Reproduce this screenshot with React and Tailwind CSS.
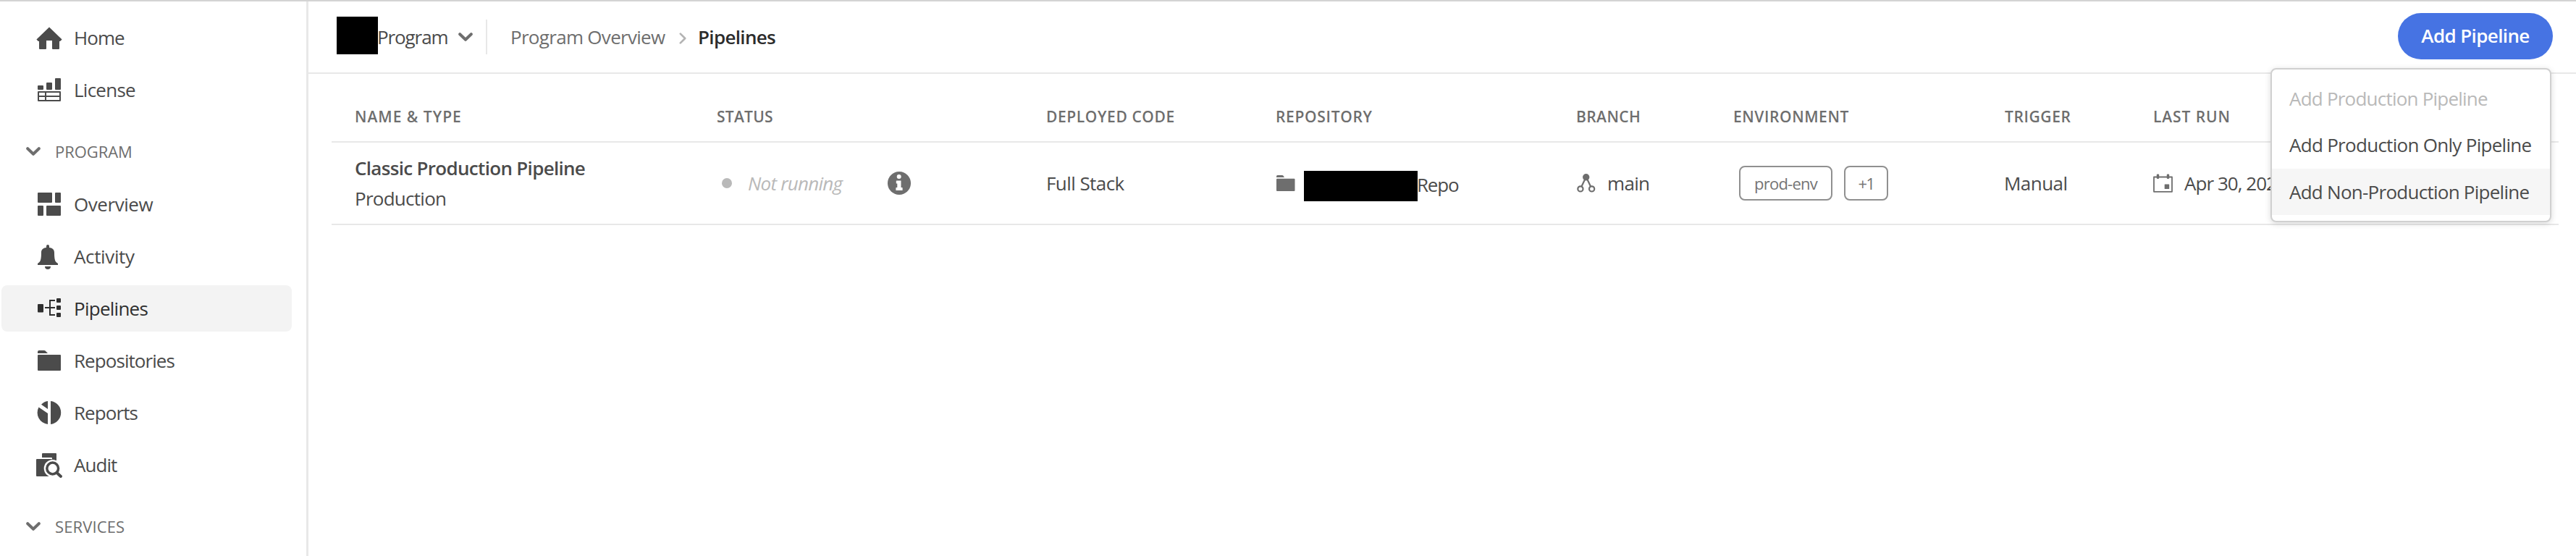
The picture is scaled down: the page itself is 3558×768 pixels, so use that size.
const icons = {
  home: (
    <path d="M18 3.4 35.6 20.6l-2 2q-.6.5-1.6.5V33q0 1-1 1h-8q-1 0-1-1V22h-8v11q0 1-1 1H5q-1 0-1-1v-9.9q-1 0-1.6-.5l-2-2Z" />
  ),
  license: (
    <>
      <rect x="2" y="12" width="8" height="6" rx="1" />
      <rect x="14" y="8" width="8" height="10" rx="1" />
      <rect x="26" y="2" width="8" height="16" rx="1" />
      <path d="M3 21h30v12H3zM3 27h30M13 21v12" fill="none" stroke="currentColor" strokeWidth="2" strokeLinejoin="round" />
    </>
  ),
  overview: (
    <>
      <rect x="2" y="2" width="20" height="14" rx="1" />
      <rect x="26" y="2" width="8" height="14" rx="1" />
      <rect x="2" y="20" width="8" height="14" rx="1" />
      <rect x="14" y="20" width="20" height="14" rx="1" />
    </>
  ),
  activity: (
    <path d="M14 6V4a2 2 0 0 1 4 0v2c5 .5 7 3 7 7 0 9 1 13 4.5 14.500q.5.5.5 1.200V30H2v-1.300q0-.7.5-1.200C6 26 7 22 7 13c0-4 2-6.500 7-7ZM12 32h8a4 4 0 0 1-8 0Z" />
  ),
  pipelines: (
    <>
      <rect x="2" y="12" width="8" height="11.500" rx="1" />
      <rect x="28" y="4" width="6" height="6" rx="1" />
      <rect x="28" y="14" width="6" height="6" rx="1" />
      <rect x="28" y="24" width="6" height="6" rx="1" />
      <path d="M12 17h14M26 7h-7v20h7" fill="none" stroke="currentColor" strokeWidth="2" />
    </>
  ),
  repositories: (
    <>
      <path d="M2 8V6q0-2 2-2h7q1 0 1.800.700L16 8Z" />
      <rect x="2" y="10" width="32" height="22" rx="1" />
    </>
  ),
  reports: (
    <path d="M20 2.100a16 16 0 0 1 0 31.800ZM16 19v14.900A16 16 0 0 1 3.500 10.400ZM16 13V2.100A16 16 0 0 0 7 6.800Z" />
  ),
  audit: (
    <>
      <path d="M8 8V3q0-1 1-1h18q1 0 1 1v9h-6V9q0-1-1-1Z" />
      <rect x="0" y="10" width="22" height="24" rx="1" />
      <circle cx="22.700" cy="23" r="12" fill="white" />
      <path d="m29 29.500 5 4.800" stroke="white" strokeWidth="6" strokeLinecap="round" />
      <circle cx="22.700" cy="23" r="7.900" fill="none" stroke="currentColor" strokeWidth="3.500" />
      <path d="m28.500 29 5.400 5" stroke="currentColor" strokeWidth="4" strokeLinecap="round" />
    </>
  ),
};

function NavItem({ icon, label, tracking, active }) {
  return (
    <div
      className={`mb-2 ml-0.5 mr-5 flex h-16 shrink-0 items-center rounded-lg pl-12 ${
        active ? "bg-[#f3f3f3] text-[#2f2f2f]" : "text-[#4b4b4b]"
      }`}
    >
      <svg className="size-9" viewBox="0 0 36 36" fill="currentColor">
        {icons[icon]}
      </svg>
      <span className={`ml-4 text-[26px] leading-none ${tracking}`}>{label}</span>
    </div>
  );
}

function Chevron() {
  return (
    <svg className="h-3 w-5" viewBox="0 0 20 12" fill="none" stroke="#6e6e6e" strokeWidth="4" strokeLinecap="round" strokeLinejoin="round">
      <path d="m2.200 2.200 7.800 7.600 7.800-7.600" />
    </svg>
  );
}

function NavSection({ label, tracking }) {
  return (
    <div className="mt-6 mb-[21px] flex h-[41px] shrink-0 items-center pl-9">
      <Chevron />
      <span className={`ml-5 text-[22px] leading-none text-[#6e6e6e] ${tracking}`}>{label}</span>
    </div>
  );
}

const columns =
  "grid grid-cols-[500px_455px_317px_415px_217px_375px_205px_1fr] border-b-2 border-[#e8e8e8] pl-8 items-center whitespace-nowrap";

const headings = [
  ["NAME & TYPE", "tracking-[1px]"],
  ["STATUS", "tracking-[0.25px]"],
  ["DEPLOYED CODE", "tracking-[0.61px]"],
  ["REPOSITORY", "tracking-[0.69px]"],
  ["BRANCH", "tracking-[0.42px]"],
  ["ENVIRONMENT", "tracking-[0.59px]"],
  ["TRIGGER", "tracking-[0.6px]"],
  ["LAST RUN", "tracking-[0.9px]"],
];

function Tag({ children, className }) {
  return (
    <span className={`flex h-12 items-center justify-center rounded-lg border-2 border-[#909090] text-[22px] text-[#747474] ${className}`}>
      {children}
    </span>
  );
}

export default function App() {
  return (
    <div className="flex h-[768px] w-full overflow-hidden border-t-2 border-[#d3d3d3] bg-white font-['Open_Sans','Noto_Sans',sans-serif] text-[26px] leading-none text-[#4b4b4b]">
      <nav className="flex w-[426px] shrink-0 flex-col border-r-[3px] border-[#e8e8e8] pt-[18px]">
        <NavItem icon="home" label="Home" tracking="tracking-[-0.96px]" />
        <NavItem icon="license" label="License" tracking="tracking-[-0.75px]" />
        <NavSection label="PROGRAM" tracking="tracking-[-0.07px]" />
        <NavItem icon="overview" label="Overview" tracking="tracking-[-0.44px]" />
        <NavItem icon="activity" label="Activity" tracking="tracking-[-0.36px]" />
        <NavItem icon="pipelines" label="Pipelines" tracking="tracking-[-0.74px]" active />
        <NavItem icon="repositories" label="Repositories" tracking="tracking-[-0.94px]" />
        <NavItem icon="reports" label="Reports" tracking="tracking-[-0.93px]" />
        <NavItem icon="audit" label="Audit" tracking="tracking-[-0.96px]" />
        <NavSection label="SERVICES" tracking="tracking-[0.11px]" />
      </nav>

      <main className="relative flex min-w-0 grow flex-col">
        <header className="flex h-[100px] shrink-0 items-center border-b-2 border-[#e8e8e8] pr-8 pl-[39px] whitespace-nowrap">
          <div className="mb-1 h-[52px] w-[57px] bg-black" />
          <span className="-ml-px w-28 tracking-[-1.1px]">Program</span>
          <Chevron />
          <div className="ml-[18px] h-12 w-0.5 bg-[#e8e8e8]" />
          <span className="ml-8 w-[233px] tracking-[-0.7px] text-[#6e6e6e]">Program Overview</span>
          <svg className="mt-1 h-4 w-2.5" viewBox="0 0 10 16" fill="none" stroke="#b3b3b3" strokeWidth="2.600" strokeLinecap="round" strokeLinejoin="round">
            <path d="m1.800 1.600 6.400 6.400-6.400 6.400" />
          </svg>
          <span className="ml-4 font-semibold tracking-[-0.67px] text-[#2c2c2c]">Pipelines</span>
          <button className="mb-0.5 ml-auto h-16 w-[214px] rounded-full bg-[#4673e3] pb-0.5 font-semibold tracking-[-0.61px] text-white">
            Add Pipeline
          </button>
        </header>

        <section className="ml-8 mr-6 flex flex-col pt-[22px]">
          <div className={`h-[73px] pt-[3px] text-[21px] font-semibold text-[#6e6e6e] ${columns}`}>
            {headings.map(([label, tracking]) => (
              <span key={label} className={tracking}>
                {label}
              </span>
            ))}
          </div>
          <div className={`h-[114px] ${columns}`}>
            <div className="leading-[42px]">
              <div className="font-semibold tracking-[-0.69px]">Classic Production Pipeline</div>
              <div className="tracking-[-0.74px]">Production</div>
            </div>
            <div className="flex items-center pl-[7px]">
              <span className="size-3.5 rounded-full bg-[#b9b9b9]" />
              <span className="ml-[22px] w-[193px] tracking-[-0.75px] text-[#b9b9b9] italic">Not running</span>
              <svg className="size-8" viewBox="0 0 32 32">
                <circle cx="16" cy="16" r="16" fill="#6e6e6e" />
                <circle cx="15.700" cy="7" r="3" fill="white" />
                <path d="M13 12.500h5.500v9.500H20q.600 0 .600.600v2.800q0 .600-.600.600h-8q-.600 0-.600-.600v-2.800q0-.600.600-.600h1.300v-5.500H12.400q-.600 0-.600-.600v-2.800q0-.600.600-.600Z" fill="white" />
              </svg>
            </div>
            <span className="tracking-[-0.57px]">Full Stack</span>
            <div className="flex items-center pl-px">
              <svg className="h-[22px] w-[26px]" viewBox="0 0 26 22" fill="#6e6e6e">
                <path d="M0 3V1.500Q0 0 1.500 0H8q.800 0 1.300.500L11 3Z" />
                <rect y="4.800" width="25.500" height="17.200" rx="1" />
              </svg>
              <div className="mt-2 ml-3 h-[42px] w-[157px] bg-black" />
              <span className="mt-[3px] -ml-px tracking-[-1.18px]">Repo</span>
            </div>
            <div className="flex items-center pl-px">
              <svg className="h-[26px] w-[26px]" viewBox="0 0 26 26" fill="none" stroke="#6e6e6e" strokeWidth="2.200">
                <circle cx="12.700" cy="4.800" r="4.700" fill="#6e6e6e" stroke="none" />
                <path d="m11.500 7-5 10.500M14 7l5 10.500" />
                <circle cx="4.900" cy="20.900" r="3.600" />
                <circle cx="20.600" cy="20.900" r="3.600" />
              </svg>
              <span className="ml-4 tracking-[-0.69px]">main</span>
            </div>
            <div className="flex gap-4 pl-2">
              <Tag className="w-[129px] tracking-[-0.75px]">prod-env</Tag>
              <Tag className="w-[61px] tracking-[-1.500px]">+1</Tag>
            </div>
            <span className="-ml-px tracking-[-0.53px]">Manual</span>
            <div className="flex items-center">
              <svg className="h-[26px] w-[27px]" viewBox="0 0 27 26" fill="#6e6e6e">
                <path d="M1 4.500h25v20.300H1Z" fill="none" stroke="#6e6e6e" strokeWidth="1.800" strokeLinejoin="round" />
                <rect x="4.800" y="0.500" width="3.400" height="6.500" rx="1.200" />
                <rect x="18.800" y="0.500" width="3.400" height="6.500" rx="1.200" />
                <rect x="15.700" y="14.500" width="6.500" height="6.500" rx="0.500" />
              </svg>
              <span className="ml-4 tracking-[-0.96px]">Apr 30, 202</span>
            </div>
          </div>
        </section>

        <div className="absolute top-[92px] right-[34px] flex h-[213px] w-[388px] flex-col rounded-lg border-2 border-[#d0d0d0] bg-white pt-[9px] whitespace-nowrap shadow-[0_2px_8px_rgba(0,0,0,0.15)]">
          <div className="flex h-16 items-center pb-0.5 pl-6 tracking-[-0.78px] text-[#b9b9b9]">Add Production Pipeline</div>
          <div className="flex h-16 items-center pb-0.5 pl-6 tracking-[-0.71px]">Add Production Only Pipeline</div>
          <div className="flex h-16 items-center bg-[#f6f6f6] pl-6 tracking-[-0.74px]">Add Non-Production Pipeline</div>
        </div>
      </main>
    </div>
  );
}
